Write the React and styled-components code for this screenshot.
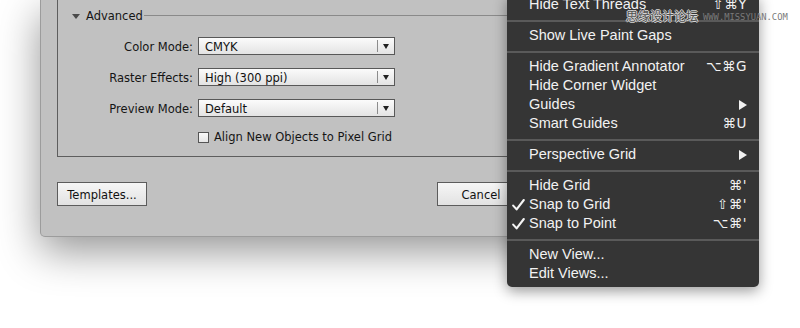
import React from "react";
import styled, { createGlobalStyle } from "styled-components";

const GlobalStyle = createGlobalStyle`
  html, body {
    margin: 0;
    padding: 0;
    background: #ffffff;
    overflow: hidden;
  }
  body {
    font-family: "DejaVu Sans", "Liberation Sans", sans-serif;
  }
`;

const Stage = styled.div`
  position: relative;
  width: 800px;
  height: 328px;
  overflow: hidden;
  background: #ffffff;
`;

const Dialog = styled.div`
  margin-left: 40px;
  width: 600px;
  height: 237px;
  box-sizing: border-box;
  background: #c1c1c1;
  border: 1px solid #9c9c9c;
  border-top: none;
  border-radius: 0 0 5px 5px;
  box-shadow: 0 14px 42px rgba(0, 0, 0, 0.42);
  padding: 0 16px;
  display: flex;
  flex-direction: column;
`;

const GroupBox = styled.div`
  height: 157px;
  box-sizing: border-box;
  border: 1px solid #5e5e5e;
  border-top: none;
  padding: 6px 0 0 14px;
  display: flex;
  flex-direction: column;
`;

const SectionHeader = styled.div`
  height: 19px;
  display: flex;
  align-items: center;
  gap: 6px;
  font-size: 11.5px;
  color: #151515;
`;

const Disclosure = styled.span`
  width: 0;
  height: 0;
  border-left: 4px solid transparent;
  border-right: 4px solid transparent;
  border-top: 5px solid #4a4a4a;
  margin-top: 1px;
`;

const Rule = styled.span`
  flex: 1;
  height: 1px;
  background: #8a8a8a;
  margin-left: -5px;
`;

const Form = styled.div`
  margin-top: 12px;
  display: grid;
  grid-template-columns: 121px 197px;
  column-gap: 5px;
  row-gap: 13px;
  align-items: center;
`;

const Label = styled.span`
  text-align: right;
  font-size: 11.5px;
  color: #151515;
  white-space: nowrap;
  padding-top: 1px;
`;

const Select = styled.div`
  height: 18px;
  box-sizing: border-box;
  border: 1px solid #585858;
  background: linear-gradient(#fbfbfb, #e3e3e3);
  display: flex;
  align-items: center;
  font-size: 11.5px;
  color: #111;
`;

const SelectValue = styled.span`
  flex: 1;
  padding: 1px 0 0 6px;
`;

const SelectArrow = styled.span`
  width: 16px;
  height: 12px;
  border-left: 1px solid #8c8c8c;
  display: flex;
  align-items: center;
  justify-content: center;
  &::after {
    content: "";
    border-left: 3.5px solid transparent;
    border-right: 3.5px solid transparent;
    border-top: 5px solid #222;
  }
`;

const CheckRow = styled.label`
  grid-column: 2;
  display: flex;
  align-items: center;
  gap: 5px;
  font-size: 11.5px;
  color: #151515;
  white-space: nowrap;
`;

const CheckBox = styled.span`
  width: 11px;
  height: 11px;
  box-sizing: border-box;
  border: 1px solid #555;
  background: linear-gradient(#fafafa, #e6e6e6);
`;

const ButtonBar = styled.div`
  margin-top: 25px;
  display: flex;
  justify-content: space-between;
`;

const ButtonGroup = styled.div`
  display: flex;
  gap: 10px;
`;

const Button = styled.button`
  width: ${p => p.$w || 88}px;
  height: 24px;
  box-sizing: border-box;
  border: 1px solid #5c5c5c;
  border-radius: 0;
  background: linear-gradient(#f6f6f6, #e2e2e2);
  font-family: "DejaVu Sans", sans-serif;
  font-size: 11.5px;
  color: #111;
  padding: 1px 0 0;
`;

const Menu = styled.div`
  position: absolute;
  left: 507px;
  top: -5px;
  width: 252px;
  box-sizing: border-box;
  padding-bottom: 4px;
  background: #353535;
  border-radius: 0 0 5px 5px;
  box-shadow: 0 4px 14px rgba(0, 0, 0, 0.4);
  font-family: "Liberation Sans", Arial, sans-serif;
  color: #f2f2f2;
`;

const Item = styled.div`
  height: 19px;
  display: grid;
  grid-template-columns: 22px 1fr auto;
  align-items: center;
  padding-right: 12px;
  font-size: 14.5px;
  line-height: 19px;
`;

const Check = styled.span`
  padding-left: 5px;
  display: flex;
  align-items: center;
`;

const Shortcut = styled.span`
  font-family: "DejaVu Sans", sans-serif;
  font-size: 13.5px;
  letter-spacing: 0.5px;
  display: flex;
  align-items: center;
`;

const Separator = styled.div`
  height: 2px;
  margin: 6px 0 4px;
  background: #5a5a5a;
`;

const Watermark = styled.div`
  position: absolute;
  left: 626px;
  top: 9px;
  display: flex;
  align-items: center;
  gap: 5px;
`;

const WatermarkCn = styled.span`
  font-family: "Noto Sans CJK SC", sans-serif;
  font-size: 12px;
  line-height: 14px;
  color: #505050;
  text-shadow: 1px 0 #d8d8d8, -1px 0 #d8d8d8, 0 1px #d8d8d8, 0 -1px #d8d8d8;
`;

const WatermarkEn = styled.span`
  font-family: "DejaVu Sans Mono", monospace;
  font-size: 8.8px;
  color: #7a7a7a;
  margin-top: 2px;
`;

const Submenu = () => (
  <svg width="8" height="10" viewBox="0 0 8 10">
    <polygon points="0,0 8,5 0,10" fill="#f2f2f2" />
  </svg>
);

const CheckMark = () => (
  <svg width="13" height="12" viewBox="0 0 13 12">
    <path
      d="M1.2 6.6 L4.6 10.4 L11.8 1"
      fill="none"
      stroke="#f4f4f4"
      strokeWidth="2.1"
      strokeLinecap="round"
      strokeLinejoin="round"
    />
  </svg>
);

const menu = [
  { label: "Hide Text Threads", key: "⇧⌘Y" },
  "sep",
  { label: "Show Live Paint Gaps" },
  "sep",
  { label: "Hide Gradient Annotator", key: "⌥⌘G" },
  { label: "Hide Corner Widget" },
  { label: "Guides", sub: true },
  { label: "Smart Guides", key: "⌘U" },
  "sep",
  { label: "Perspective Grid", sub: true },
  "sep",
  { label: "Hide Grid", key: "⌘'" },
  { label: "Snap to Grid", key: "⇧⌘'", checked: true },
  { label: "Snap to Point", key: "⌥⌘'", checked: true },
  "sep",
  { label: "New View..." },
  { label: "Edit Views..." }
];

const fields = [
  ["Color Mode:", "CMYK"],
  ["Raster Effects:", "High (300 ppi)"],
  ["Preview Mode:", "Default"]
];

export default function App() {
  return (
    <Stage>
      <GlobalStyle />
      <Dialog>
        <GroupBox>
          <SectionHeader>
            <Disclosure />
            <span>Advanced</span>
            <Rule />
          </SectionHeader>
          <Form>
            {fields.map(([label, value]) => (
              <React.Fragment key={label}>
                <Label>{label}</Label>
                <Select>
                  <SelectValue>{value}</SelectValue>
                  <SelectArrow />
                </Select>
              </React.Fragment>
            ))}
            <CheckRow>
              <CheckBox />
              Align New Objects to Pixel Grid
            </CheckRow>
          </Form>
        </GroupBox>
        <ButtonBar>
          <Button $w={90}>Templates...</Button>
          <ButtonGroup>
            <Button>Cancel</Button>
            <Button>OK</Button>
          </ButtonGroup>
        </ButtonBar>
      </Dialog>

      <Menu>
        {menu.map((item, i) =>
          item === "sep" ? (
            <Separator key={i} />
          ) : (
            <Item key={i}>
              <Check>{item.checked ? <CheckMark /> : null}</Check>
              <span>{item.label}</span>
              <Shortcut>{item.sub ? <Submenu /> : item.key}</Shortcut>
            </Item>
          )
        )}
      </Menu>

      <Watermark>
        <WatermarkCn>思缘设计论坛</WatermarkCn>
        <WatermarkEn>WWW.MISSYUAN.COM</WatermarkEn>
      </Watermark>
    </Stage>
  );
}
